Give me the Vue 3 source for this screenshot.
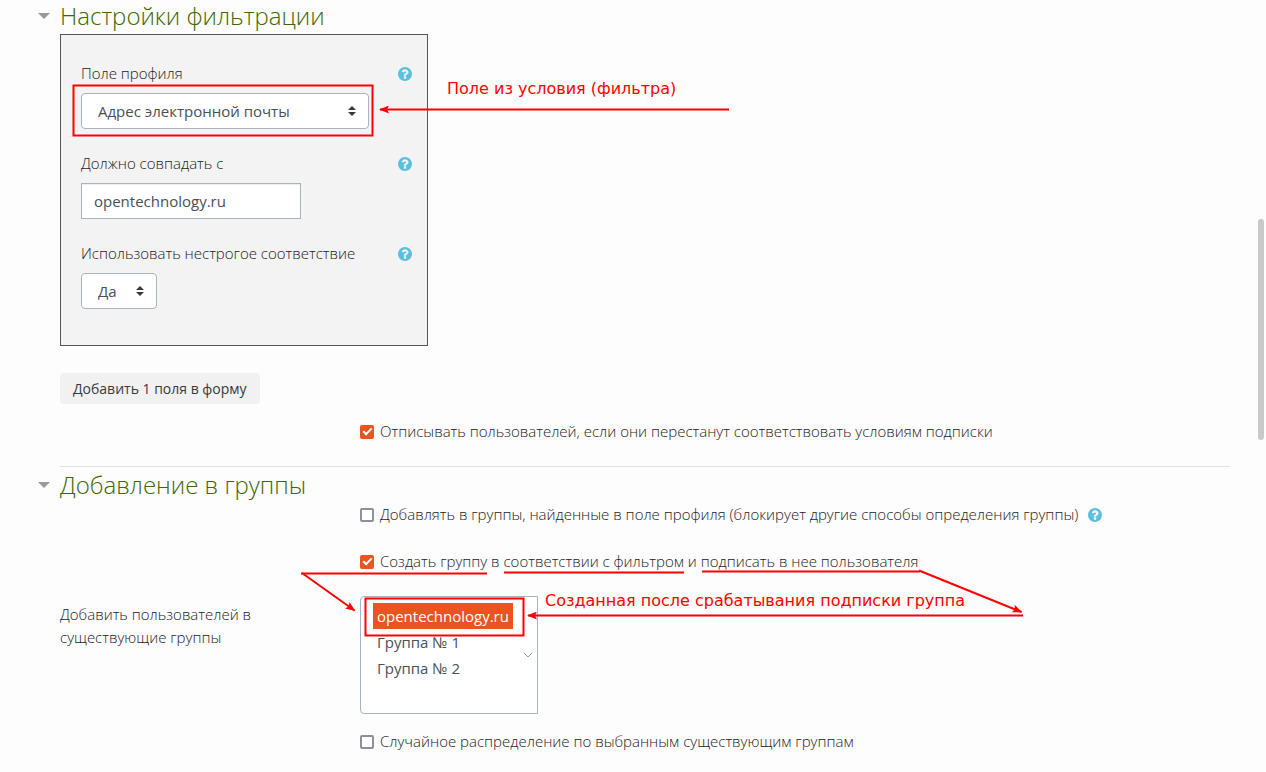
<script setup>
import { ref, h } from 'vue'

const profileField = ref('email')
const matchValue = ref('opentechnology.ru')
const looseMatch = ref('yes')
const unsubscribe = ref(true)
const addByProfile = ref(false)
const createGroup = ref(true)
const randomSpread = ref(false)
const groups = ref(['opentechnology.ru'])
const groupOptions = ['opentechnology.ru', 'Группа № 1', 'Группа № 2']
const filtersOpen = ref(true)
const groupsOpen = ref(true)

const helpPath =
  'M896 1376v-192q0-14-9-23t-23-9h-192q-14 0-23 9t-9 23v192q0 14 9 23t23 9h192q14 0 23-9t9-23zm256-672q0-88-55.5-163t-138.5-116-170-41q-243 0-371 213-15 24 8 42l132 100q7 6 19 6 16 0 25-12 53-68 86-92 34-24 86-24 48 0 85.5 26t37.5 59q0 38-20 61t-68 45q-63 28-115.5 86.5t-52.5 125.5v36q0 14 9 23t23 9h192q14 0 23-9t9-23q0-19 21.5-49.5t54.5-49.5q32-18 49-28.5t46-35 44.5-48 28-60.5 12.5-81zm384 192q0 209-103 385.5t-279.5 279.5-385.5 103-385.5-103-279.5-279.5-103-385.5 103-385.5 279.5-279.5 385.5-103 385.5 103 279.5 279.5 103 385.5z'

const HelpIcon = () =>
  h('svg', { viewBox: '0 128 1536 1536', width: 14, height: 14, 'aria-hidden': 'true' }, [
    h('path', { d: helpPath, fill: '#5bc0de' }),
  ])
const Sorter = () =>
  h('svg', { viewBox: '0 0 8 10', width: 8, height: 10, 'aria-hidden': 'true' }, [
    h('path', { d: 'M4 0 8 4H0zM4 10 0 6h8z', fill: '#343a40' }),
  ])
</script>

<template>
  <main class="page">
    <section class="section">
      <h2 class="title">
        <button type="button" class="toggle" aria-label="Свернуть настройки фильтрации" @click="filtersOpen = !filtersOpen"></button>
        Настройки фильтрации
      </h2>
      <div v-show="filtersOpen">
        <div class="panel">
          <div class="field">
            <div class="field-head">
              <label for="profile-field">Поле профиля</label>
              <button type="button" class="help" aria-label="Справка"><HelpIcon /></button>
            </div>
            <div class="select select-wide">
              <select id="profile-field" v-model="profileField">
                <option value="email">Адрес электронной почты</option>
              </select>
              <Sorter class="sorter" />
            </div>
          </div>
          <div class="field">
            <div class="field-head">
              <label for="match-value">Должно совпадать с</label>
              <button type="button" class="help" aria-label="Справка"><HelpIcon /></button>
            </div>
            <input id="match-value" v-model="matchValue" class="text" type="text" />
          </div>
          <div class="field">
            <div class="field-head">
              <label for="loose-match">Использовать нестрогое соответствие</label>
              <button type="button" class="help" aria-label="Справка"><HelpIcon /></button>
            </div>
            <div class="select">
              <select id="loose-match" v-model="looseMatch">
                <option value="yes">Да</option>
              </select>
              <Sorter class="sorter" />
            </div>
          </div>
        </div>
        <button type="button" class="add">Добавить 1 поля в форму</button>
        <div class="check check-unsubscribe">
          <input id="unsubscribe" v-model="unsubscribe" type="checkbox" />
          <label for="unsubscribe">Отписывать пользователей, если они перестанут соответствовать условиям подписки</label>
        </div>
      </div>
    </section>

    <section class="section section-ruled">
      <h2 class="title">
        <button type="button" class="toggle" aria-label="Свернуть добавление в группы" @click="groupsOpen = !groupsOpen"></button>
        Добавление в группы
      </h2>
      <div v-show="groupsOpen" class="rows">
        <div class="check">
          <input id="add-by-profile" v-model="addByProfile" type="checkbox" />
          <label for="add-by-profile">Добавлять в группы, найденные в поле профиля (блокирует другие способы определения группы)</label>
          <button type="button" class="help help-inline" aria-label="Справка"><HelpIcon /></button>
        </div>
        <div class="check check-create">
          <input id="create-group" v-model="createGroup" type="checkbox" />
          <label for="create-group">Создать группу в соответствии с фильтром и подписать в нее пользователя</label>
        </div>
        <div class="split">
          <label class="split-label" for="groups">Добавить пользователей в существующие группы</label>
          <div class="list">
            <select id="groups" v-model="groups" multiple size="4">
              <option v-for="name in groupOptions" :key="name" :value="name">{{ name }}</option>
            </select>
            <svg class="chevron" viewBox="0 0 10 6" width="10" height="6" aria-hidden="true">
              <path d="M1 1l4 4 4-4" fill="none" stroke="#999" />
            </svg>
          </div>
        </div>
        <div class="check">
          <input id="random-spread" v-model="randomSpread" type="checkbox" />
          <label for="random-spread">Случайное распределение по выбранным существующим группам</label>
        </div>
      </div>
    </section>

    <svg class="notes" width="1040" height="650" viewBox="0 0 1040 650">
      <defs>
        <marker id="tip" viewBox="0 0 10 8" refX="9" refY="4" markerWidth="10" markerHeight="8" markerUnits="userSpaceOnUse" orient="auto">
          <path d="M10 4 0 0l2 4-2 4z" fill="#f00" />
        </marker>
      </defs>
      <g fill="none" stroke="#f00" stroke-width="2">
        <rect x="73.5" y="85.5" width="299" height="50" />
        <path d="M729 109.500H380" marker-end="url(#tip)" />
        <rect x="365.500" y="598.500" width="158" height="37" />
        <path d="M1023 615.500H528" marker-end="url(#tip)" />
        <path d="M487 573.500H301" />
        <path d="M302 573 354.500 610.500" marker-end="url(#tip)" />
        <path d="M504 572.500H684" />
        <path d="M702 571.500H920" />
        <path d="M919 570.500 1021.500 612" marker-end="url(#tip)" />
      </g>
      <text x="447" y="94">Поле из условия (фильтра)</text>
      <text x="545" y="606">Созданная после срабатывания подписки группа</text>
    </svg>
    <div class="scroll-thumb"></div>
  </main>
</template>

<style>
html,
body {
  background: #fdfdfd;
}
</style>

<style scoped>
.page {
  position: relative;
  box-sizing: border-box;
  min-height: 100vh;
  padding: 0 36px 0 60px;
  overflow: hidden;
  color: #1d2125;
  font: 300 15px/23px "Open Sans", "Noto Sans", sans-serif;
}
button,
input,
select {
  font: inherit;
  margin: 0;
}
.title {
  display: flex;
  align-items: center;
  margin: 0 0 2px;
  color: #3d6600;
  font-size: 24px;
  font-weight: 300;
  line-height: 32px;
}
.toggle {
  width: 12px;
  height: 6px;
  margin: 0 10px 0 -22px;
  padding: 0;
  border: 0;
  background: #999;
  clip-path: polygon(0 0, 100% 0, 50% 100%);
}
.panel {
  display: flex;
  flex-direction: column;
  gap: 23px;
  box-sizing: border-box;
  max-width: 368px;
  padding: 27px 15px 36px 20px;
  border: 1px solid #555;
  background: #f3f3f3;
}
.field-head {
  display: flex;
  align-items: center;
  justify-content: space-between;
  margin-bottom: 8px;
}
.help {
  display: flex;
  padding: 0;
  border: 0;
  background: none;
}
.help-inline {
  margin-left: 10px;
}
.select {
  position: relative;
  display: flex;
  width: fit-content;
}
.select-wide {
  width: 288px;
}
.select select {
  appearance: none;
  width: 100%;
  height: 36px;
  padding: 0 39px 0 16px;
  border: 1px solid #a8b3bd;
  border-radius: 4px;
  background: #fff;
  color: #495057;
  font-weight: 400;
}
.sorter {
  position: absolute;
  right: 13px;
  top: 13px;
  pointer-events: none;
}
.text {
  display: block;
  box-sizing: border-box;
  width: 220px;
  height: 36px;
  padding: 0 12px;
  border: 1px solid #a8b3bd;
  border-radius: 0;
  background: #fff;
  box-shadow: inset 0 1px 1px rgba(0, 0, 0, 0.075);
  color: #495057;
  font-weight: 400;
}
.add {
  display: block;
  height: 31px;
  margin: 27px 0 16px;
  padding: 0 13px;
  border: 0;
  border-radius: 4px;
  background: #f1f1f1;
  color: #373a3c;
  font-size: 14px;
  font-weight: 400;
}
.check {
  display: flex;
  align-items: center;
  margin-left: 300px;
}
.check-unsubscribe {
  margin-bottom: 23px;
}
.check-create {
  margin-top: 1px;
}
.check input {
  appearance: none;
  box-sizing: border-box;
  flex: none;
  width: 14px;
  height: 14px;
  margin-right: 6px;
  border: 2px solid #8f8f9d;
  border-radius: 2px;
  background: #fff;
}
.check input:checked {
  display: flex;
  align-items: center;
  justify-content: center;
  border-color: #e95420;
  background: #e95420;
}
.check input:checked::before {
  content: "";
  flex: none;
  width: 7px;
  height: 3px;
  margin-bottom: 3px;
  border: solid #fff;
  border-width: 0 0 2px 2px;
  transform: rotate(-45deg);
}
.section-ruled {
  padding-top: 2px;
  border-top: 1px solid #dee2e6;
}
.rows {
  display: flex;
  flex-direction: column;
  gap: 23px;
}
.split {
  display: flex;
  margin-bottom: -7px;
}
.split-label {
  box-sizing: border-box;
  width: 300px;
  padding: 7px 80px 0 0;
}
.list {
  position: relative;
  display: flex;
}
.list select {
  appearance: none;
  box-sizing: border-box;
  height: 118px;
  padding: 6px 24px 6px 12px;
  overflow: hidden;
  border: 1px solid #a8b3bd;
  border-radius: 4px 0 0 4px;
  background: #fff;
  color: #495057;
  font-weight: 400;
}
.list option {
  box-sizing: border-box;
  height: 26px;
  min-height: 26px;
  padding: 3px 4px 1px;
  line-height: 22px;
}
.list option:checked {
  background: linear-gradient(#e95420, #e95420);
  color: #fff;
  -webkit-text-fill-color: #fff;
}
.chevron {
  position: absolute;
  right: 5px;
  top: 56px;
  pointer-events: none;
}
.notes {
  position: absolute;
  left: 0;
  top: 0;
  pointer-events: none;
}
.notes text {
  fill: #f00;
  font: 400 16px "DejaVu Sans", sans-serif;
}
.scroll-thumb {
  position: absolute;
  top: 219px;
  right: 2px;
  width: 6px;
  height: 221px;
  border-radius: 3px;
  background: #c9c9c9;
}
</style>
